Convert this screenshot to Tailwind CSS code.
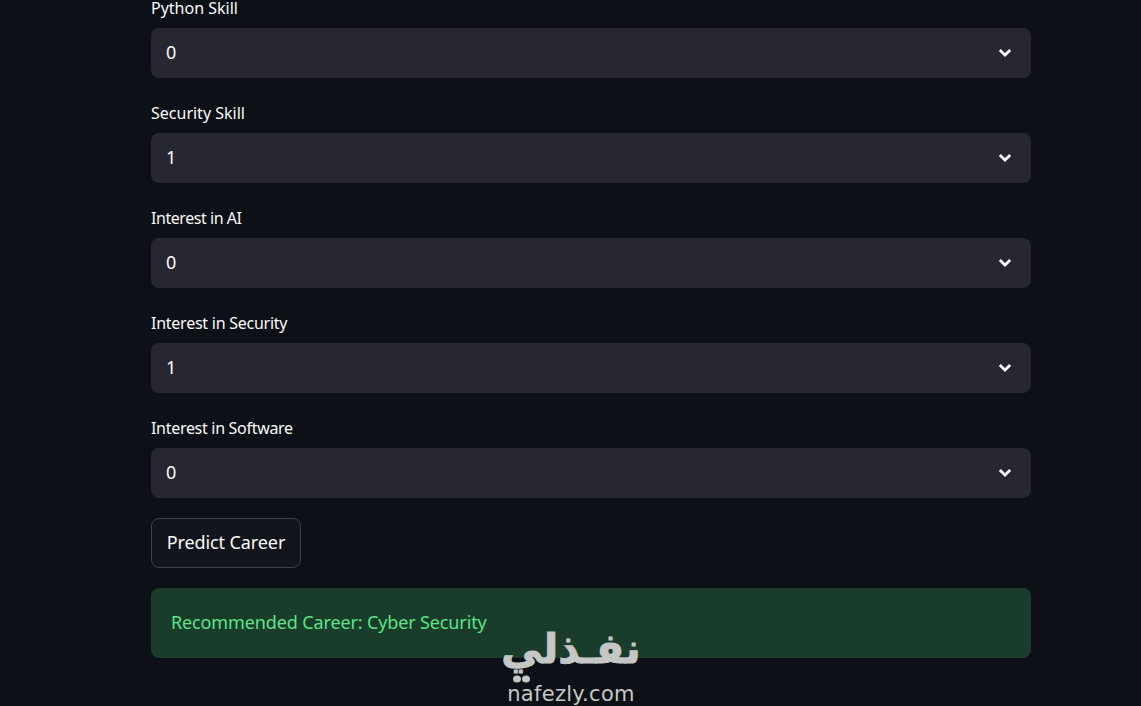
<!DOCTYPE html>
<html lang="en">
<head>
<meta charset="utf-8">
<script src="https://cdn.jsdelivr.net/npm/@tailwindcss/browser@4"></script>
<title>Career</title>
</head>
<body class="bg-[#0d1016] overflow-hidden font-['Noto_Sans','Liberation_Sans',sans-serif]">
<main class="relative h-[706px] w-[1141px] overflow-hidden">
  <div class="w-[880px] ml-[151px] flex flex-col">
    <label class="h-[18px] leading-[17px] text-[16px] text-[#fafafa] mb-[10px]">Python Skill</label>
    <div class="h-[50px] rounded-lg bg-[#262730] flex items-center justify-between pl-[16px] pr-[17px] text-[#fafafa] text-[18px] leading-[48px] mb-[25px]"><span class="-mt-[2px] -ml-[1px]">0</span><svg width="18" height="18" viewBox="0 0 18 18" fill="none" stroke="#fafafa" stroke-width="2.8"><path d="M3.8 6 9 11l5.2-5"/></svg></div>
    <label class="h-[20px] leading-[21px] text-[16px] text-[#fafafa] mb-[10px]">Security Skill</label>
    <div class="h-[50px] rounded-lg bg-[#262730] flex items-center justify-between pl-[16px] pr-[17px] text-[#fafafa] text-[18px] leading-[48px] mb-[25px]"><span class="-mt-[2px] -ml-[1px]">1</span><svg width="18" height="18" viewBox="0 0 18 18" fill="none" stroke="#fafafa" stroke-width="2.8"><path d="M3.8 6 9 11l5.2-5"/></svg></div>
    <label class="h-[20px] leading-[21px] text-[16px] tracking-[-0.45px] text-[#fafafa] mb-[10px]">Interest in AI</label>
    <div class="h-[50px] rounded-lg bg-[#262730] flex items-center justify-between pl-[16px] pr-[17px] text-[#fafafa] text-[18px] leading-[48px] mb-[25px]"><span class="-mt-[2px] -ml-[1px]">0</span><svg width="18" height="18" viewBox="0 0 18 18" fill="none" stroke="#fafafa" stroke-width="2.8"><path d="M3.8 6 9 11l5.2-5"/></svg></div>
    <label class="h-[20px] leading-[21px] text-[16px] tracking-[-0.25px] text-[#fafafa] mb-[10px]">Interest in Security</label>
    <div class="h-[50px] rounded-lg bg-[#262730] flex items-center justify-between pl-[16px] pr-[17px] text-[#fafafa] text-[18px] leading-[48px] mb-[25px]"><span class="-mt-[2px] -ml-[1px]">1</span><svg width="18" height="18" viewBox="0 0 18 18" fill="none" stroke="#fafafa" stroke-width="2.8"><path d="M3.8 6 9 11l5.2-5"/></svg></div>
    <label class="h-[20px] leading-[21px] text-[16px] tracking-[-0.3px] text-[#fafafa] mb-[10px]">Interest in Software</label>
    <div class="h-[50px] rounded-lg bg-[#262730] flex items-center justify-between pl-[16px] pr-[17px] text-[#fafafa] text-[18px] leading-[48px] mb-[20px]"><span class="-mt-[2px] -ml-[1px]">0</span><svg width="18" height="18" viewBox="0 0 18 18" fill="none" stroke="#fafafa" stroke-width="2.8"><path d="M3.8 6 9 11l5.2-5"/></svg></div>
    <button class="w-[150px] h-[50px] rounded-lg border border-[#3d3f4a] bg-[#13151d] text-[#fafafa] text-[18px] tracking-[-0.1px] flex items-center justify-center pb-[2px] mb-[20px]">Predict Career</button>
    <div class="h-[70px] rounded-lg bg-[#193d2a] text-[#5ce488] text-[18px] tracking-[-0.13px] flex items-center pl-[20px] pb-[2px]">Recommended Career: Cyber Security</div>
  </div>
  <div class="absolute left-[500px] top-[620px] w-[142px] flex flex-col items-center text-[#c4c7c6]">
    <div dir="rtl" lang="ar" class="font-['DejaVu_Sans',sans-serif] font-bold text-[41px] leading-[58px] h-[54px] whitespace-nowrap [-webkit-text-stroke:1px_#c4c7c6]">نفـذلي</div>
    <svg class="self-start ml-[13px] mt-[1px] shrink-0" width="18" height="8" viewBox="0 0 18 8" fill="#c4c7c6"><ellipse cx="4" cy="4" rx="4" ry="3.5"/><ellipse cx="13" cy="4" rx="4" ry="3.5"/></svg>
    <div class="font-['DejaVu_Sans',sans-serif] text-[21px] leading-[26px] tracking-[0.3px] whitespace-nowrap -mt-[2px]">nafezly.com</div>
  </div>
</main>
</body>
</html>
